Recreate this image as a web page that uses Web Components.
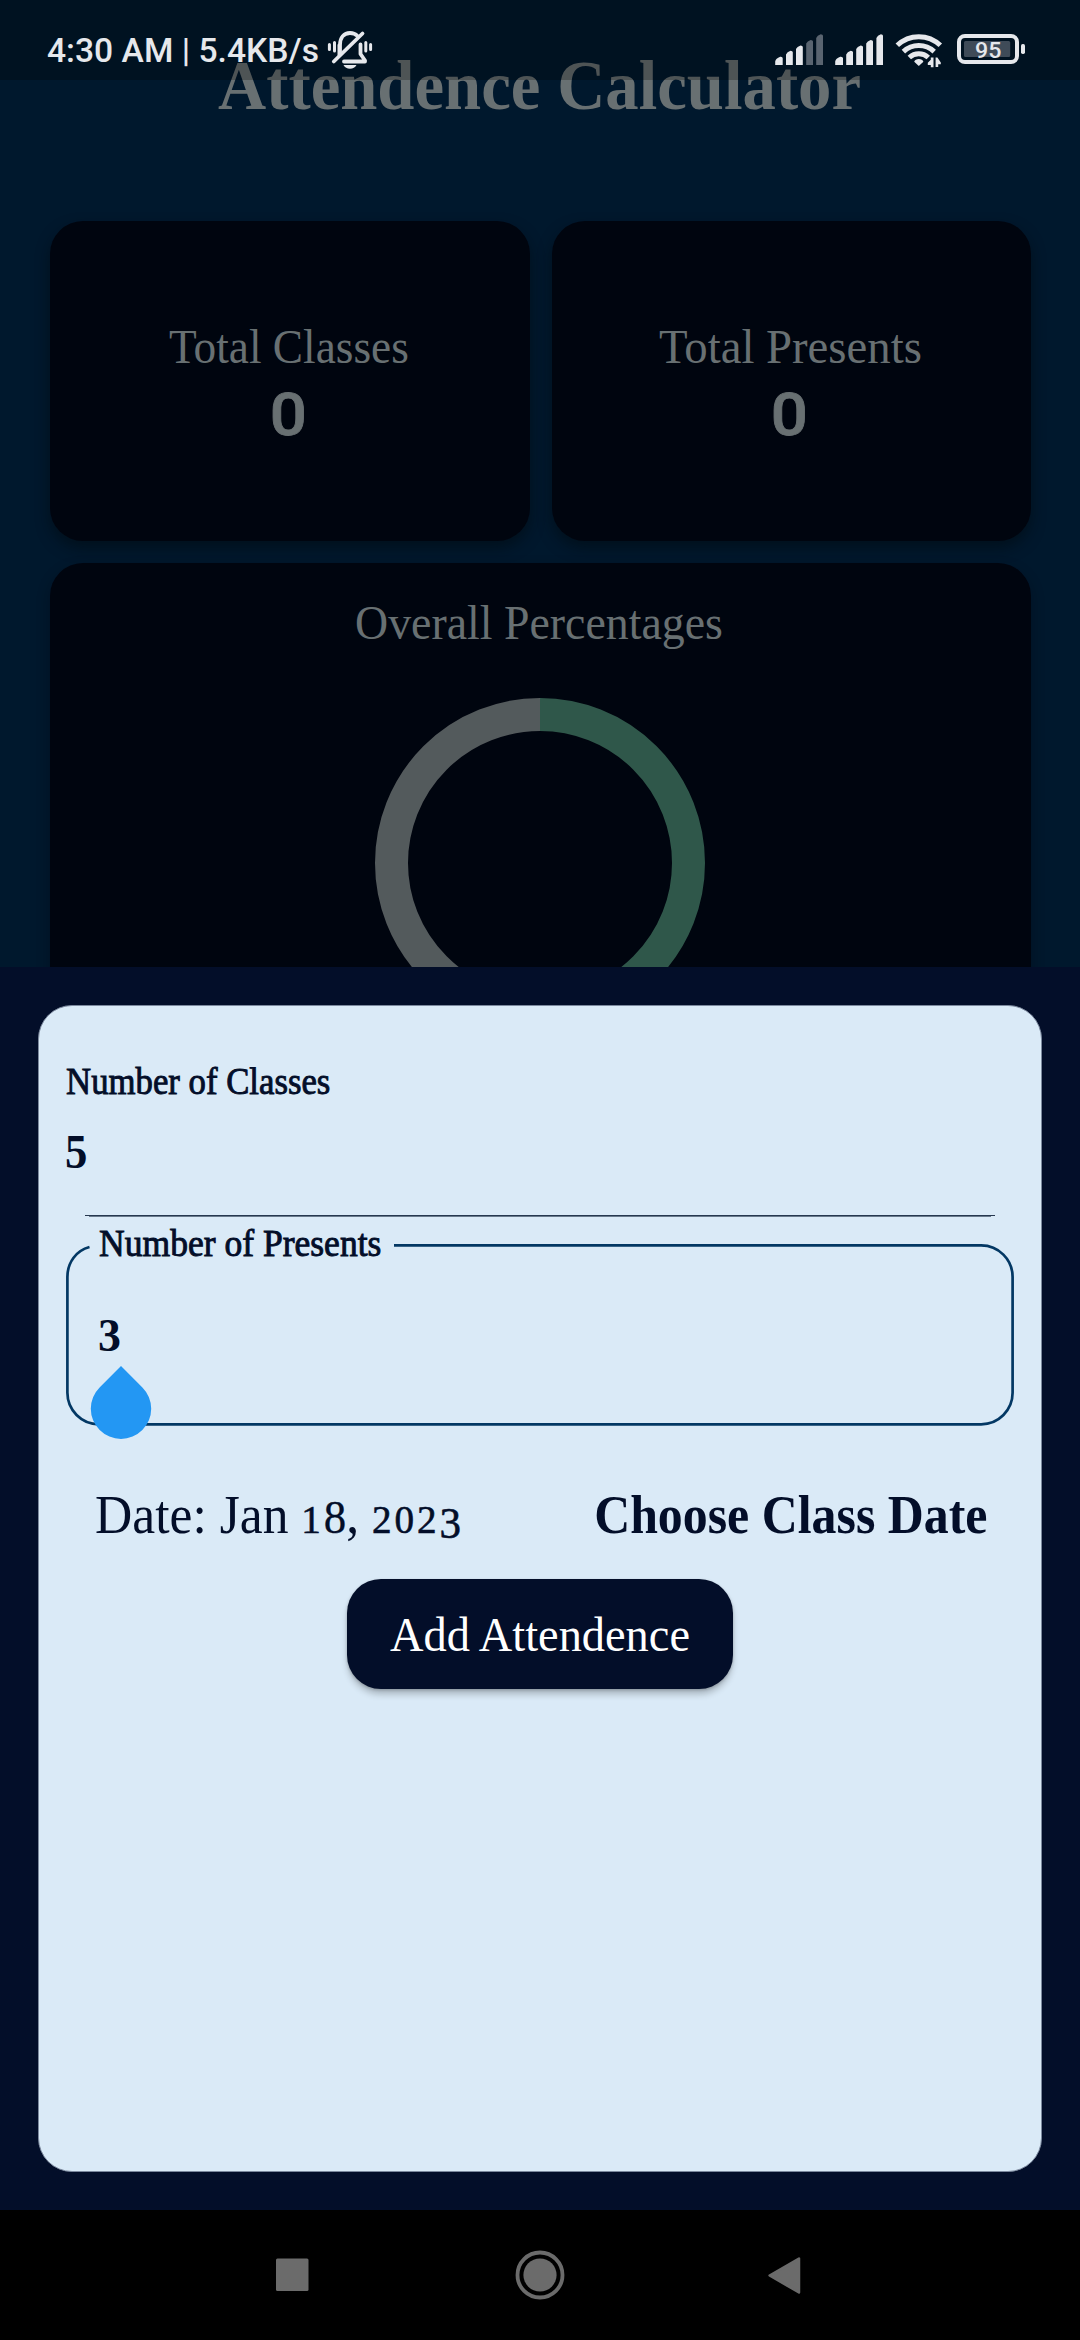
<!DOCTYPE html>
<html lang="en">
<head>
<meta charset="utf-8">
<title>Attendence Calculator</title>
<style>
  html, body { margin: 0; background: #000; }
  body { width: 1080px; height: 2340px; overflow: hidden; font-family: "Liberation Serif", serif; }
</style>
</head>
<body>
<attendance-app></attendance-app>
<script>
const define = (name, html, after) => customElements.define(name, class extends HTMLElement {
  connectedCallback() {
    if (this.shadowRoot) return;
    this.attachShadow({ mode: 'open' }).innerHTML = typeof html === 'function' ? html(this) : html;
    if (after) after(this);
  }
});

define('attendance-app', `
<style>
  :host { display: flex; flex-direction: column; position: relative; width: 1080px; height: 2340px; overflow: hidden; }
  phone-status { position: absolute; left: 0; top: 0; z-index: 2; }
</style>
<phone-status></phone-status>
<dash-board></dash-board>
<bottom-sheet></bottom-sheet>
<nav-bar></nav-bar>`);

define('phone-status', `
<style>
  :host { display: flex; width: 1080px; height: 80px; background: rgba(0,0,0,.25); color: #e6e8ec; }
  .clock { margin: 33px 0 0 47px; }
  .bell { margin: 30px 0 0 8px; }
  .right { margin-left: auto; margin-right: 50px; display: flex; padding-top: 30px; }
  .battery { display: grid; margin-left: 12px; }
  .battery > * { grid-area: 1 / 1; }
  .battery .num { justify-self: start; margin: 9px 0 0 19px; }
  svg { display: block; overflow: visible; }
</style>
<fit-text class="clock" size="34" w="271.5" weight="500" family="Roboto">4:30 AM | 5.4KB/s</fit-text>
<svg class="bell" width="46" height="40" viewBox="327 30 46 40" fill="none" stroke="#e6e8ec" stroke-width="3.8" stroke-linecap="round" stroke-linejoin="round">
  <path d="M329.4 44.500v5M334.500 42.500v8.500M365.800 42.500v8.500M370.600 44.500v5" stroke-width="3"/>
  <path d="M340 54V45C340 37.500 344 33 350 33C353 33 355.500 34 357.500 36"/>
  <path d="M360.500 44.500V54L365 60.500V61.500H344"/>
  <path d="M362.500 33.500L333.800 61.500"/>
  <path d="M343.500 65H356.500C355 67.500 353 68.800 350 68.800S345 67.500 343.500 65Z" fill="#e6e8ec" stroke="none"/>
  <path d="M339 45V55" stroke-width="3"/>
</svg>
<div class="right">
  <svg width="171" height="40" viewBox="774 30 171 40" fill="#e6e8ec">
    <path d="M775.200 65v-3.500q.5-3 5-4.700q2.500-.3 2.500 1.500v6.700zM786 65v-10.500q1-2.500 4.500-3.700q2.300 0 2.300 1.500v12.700zM796 65v-16q1-2.500 4.500-3.600q2.300 0 2.300 1.500v18.100z"/>
    <path fill="#596470" d="M806.200 65v-21.500q1-2.500 4.500-3.600q2.300 0 2.300 1.500v23.600zM816.200 65v-27q1-2.500 4.500-3.700q2.300 0 2.300 1.500v29.200z"/>
    <path d="M835.200 65v-3.500q.5-3 5-4.700q2.800-.3 2.800 1.500v6.700zM846.200 65v-10.500q1-2.500 4.500-3.700q2.300 0 2.300 1.500v12.700zM856.200 65v-16q1-2.500 4.500-3.600q2.300 0 2.300 1.500v18.100zM866.200 65v-21.500q1-2.500 4.500-3.600q2.300 0 2.300 1.500v23.600zM876.400 65v-27q1-2.500 4.500-3.700q2.100 0 2.100 1.500v29.200z"/>
    <g fill="none" stroke="#e6e8ec" stroke-width="5">
      <path d="M897.300 45.300A31 31 0 0 1 940.300 45.300"/>
      <path d="M903.400 51.600A22.500 22.500 0 0 1 934.200 51.600"/>
      <path d="M909.300 57.500A14 14 0 0 1 928.300 57.500"/>
    </g>
    <path d="M918.800 66l-4.600-4.300q1-2.600 4.600-2.600t4.600 2.600z"/>
    <path d="M930.800 57.500h2.700v9.800h-2.700v-2.200h-3v-2.300l3-3zM935.600 57.500h1.800l3.400 5.100v1.700h-2.600v2.800h-2.600z"/>
  </svg>
  <div class="battery">
    <svg width="73" height="40" viewBox="957 30 73 40">
      <rect x="959" y="36" width="58" height="26" rx="6" fill="none" stroke="#e6e8ec" stroke-width="4"/>
      <rect x="964" y="41" width="46.200" height="16" rx="1.500" fill="#3f4b58"/>
      <rect x="1021" y="44" width="4" height="10" rx="1.700" fill="#e6e8ec"/>
    </svg>
    <fit-text class="num" size="22.500" w="24.500" weight="500" family="Roboto">95</fit-text>
  </div>
</div>`);

define('dash-board', `
<style>
  :host { display: flex; flex-direction: column; flex: none; box-sizing: border-box; width: 1080px; height: 967px; overflow: hidden;
    background: #00182d; color: #687072; padding: 52px 49px 0 50px; }
  .title { align-self: center; margin-right: 3px; }
  .stats { display: flex; gap: 22px; margin-top: 100px; }
  .overall { flex: none; margin-top: 22px; height: 600px; background: #00050f; border-radius: 33px; box-shadow: 0 6px 14px rgba(0,4,12,.3);
    display: flex; flex-direction: column; align-items: center; box-sizing: border-box; padding-top: 35px; }
  .overall fit-text { margin-right: 3px; }
  .overall svg { display: block; margin: 51px 1px 0 0; }
</style>
<fit-text class="title" size="69" w="642.500" weight="700">Attendence Calculator</fit-text>
<div class="stats">
  <stat-card label="Total Classes" w="239" value="0"></stat-card>
  <stat-card label="Total Presents" w="262" value="0"></stat-card>
</div>
<div class="overall">
  <fit-text size="48.500" w="366">Overall Percentages</fit-text>
  <svg width="330" height="330" viewBox="0 0 330 330" fill="none" stroke-width="33">
    <path d="M165 16.500A148.500 148.500 0 0 1 165 313.500" stroke="#2f574a"/>
    <path d="M165 16.500A148.500 148.500 0 0 0 165 313.500" stroke="#535a5c"/>
  </svg>
</div>`);

define('stat-card', h => `
<style>
  :host { display: flex; flex-direction: column; align-items: center; flex: 1; box-sizing: border-box; height: 320px; padding: 101px 3px 0 0; gap: 14px;
    background: #00050f; border-radius: 33px; box-shadow: 0 7px 14px rgba(0,12,18,.6); }
</style>
<fit-text size="48.500" w="${h.getAttribute('w')}">${h.getAttribute('label')}</fit-text>
<fit-text size="59" w="31" weight="500" family="Roboto" style="-webkit-text-stroke:.8px #687072">${h.getAttribute('value')}</fit-text>`);

define('bottom-sheet', `
<style>
  :host { display: block; flex: none; box-sizing: border-box; width: 1080px; height: 1243px; padding: 38px; background: #030e29; color: #030e29; }
  .panel { box-sizing: border-box; height: 1167px; background: #daeaf7; border: 1px solid #7c899e; border-radius: 34px; padding: 0 27px;
    display: flex; flex-direction: column; }
  .row { display: flex; justify-content: space-between; margin: 62px 28px 0 30px; }
  .add { align-self: center; box-sizing: border-box; width: 386px; height: 110px; margin-top: 37px; padding: 31px 2px 0 0; border-radius: 34px;
    background: #030e29; color: #fff; display: flex; justify-content: center; box-shadow: 0 6px 7px -1px rgba(0,0,0,.24), 0 1px 3px rgba(0,0,0,.2); }
  .small { font-size: 41px; letter-spacing: 3px; -webkit-text-stroke: .6px #030e29; }
  .eight { font-size: 47px; -webkit-text-stroke: .3px #030e29; }
  .low { display: inline-block; line-height: 1; height: 0; transform: translateY(5px); font-size: 45px; letter-spacing: 0; }
</style>
<div class="panel">
  <line-field></line-field>
  <outline-field></outline-field>
  <div class="row">
    <fit-text size="54" w="363">Date: Jan <span class="small">1</span><span class="eight">8</span>, <span class="small">202<span class="low">3</span></span></fit-text>
    <fit-text size="54" w="390.500" weight="700">Choose Class Date</fit-text>
  </div>
  <div class="add"><fit-text size="48.500" w="298.500">Add Attendence</fit-text></div>
</div>`);

define('line-field', `
<style>
  :host { display: flex; flex-direction: column; align-items: flex-start; padding-top: 57px; }
  .label { margin-left: 1px; -webkit-text-stroke: .9px #030e29; }
  .value { margin-top: 28px; }
  svg { display: block; margin-top: 39px; }
</style>
<fit-text class="label" size="37" w="263">Number of Classes</fit-text>
<fit-text class="value" size="48" w="20.500" weight="700">5</fit-text>
<svg width="948" height="2" viewBox="0 0 948 2"><path d="M19 0H929V1H19Z" fill="#26384f"/><path d="M23 1H925V2H23Z" fill="#687a8c"/></svg>`);

define('outline-field', `
<style>
  :host { display: grid; position: relative; width: 948px; height: 182px; margin-top: 27px; justify-items: start; align-items: start; }
  .box, .label, .value { grid-area: 1 / 1; }
  .label { margin: -19px 0 0 34px; -webkit-text-stroke: .9px #030e29; }
  .value { margin: 68px 0 0 33px; }
  svg { display: block; overflow: visible; }
  .handle { position: absolute; left: 25px; top: 122px; }
</style>
<svg class="box" width="948" height="182" viewBox="0 0 948 182" fill="none" stroke="#033864" stroke-width="2.700">
  <path d="M328 1.400H915A31.500 31.500 0 0 1 946.600 33V148.500A31.500 31.500 0 0 1 915 180.300H33A31.500 31.500 0 0 1 1.400 148.500V33C1.400 18 10.500 6.500 23.500 3"/>
</svg>
<fit-text class="label" size="37" w="281">Number of Presents</fit-text>
<fit-text class="value" size="47" w="20.500" weight="700">3</fit-text>
<svg class="handle" width="61" height="73" viewBox="0 0 61 73"><path fill="#2397f3" d="M30 0L51.400 21.400A30.200 30.200 0 1 1 8.600 21.400Z"/></svg>`);

define('nav-bar', `
<style>
  :host { display: flex; justify-content: space-between; align-items: center; box-sizing: border-box; width: 1080px; height: 130px; padding: 0 279px 0 275px; background: #000; }
  svg { display: block; }
  .home { margin-left: 4px; }
</style>
<svg width="34" height="50" viewBox="275 2250 34 50"><rect x="276" y="2258.500" width="32.500" height="32.500" rx="1.500" fill="#6b6b6b"/></svg>
<svg class="home" width="52" height="52" viewBox="514 2249.500 52 52"><circle cx="540" cy="2275.500" r="22.500" fill="none" stroke="#6b6b6b" stroke-width="3.800"/><circle cx="540" cy="2275.500" r="16.600" fill="#6b6b6b"/></svg>
<svg width="34" height="50" viewBox="767 2250 34 50"><path d="M769.600 2275.500L799 2258.500V2292.500Z" fill="#6b6b6b" stroke="#6b6b6b" stroke-width="2.500" stroke-linejoin="round"/></svg>`);

/* One line of text whose ink is scaled horizontally to an exact width. */
define('fit-text', h => {
  const size = +h.getAttribute('size');
  return `<style>
  :host { display: block; flex: none; width: ${h.getAttribute('w')}px; height: ${Math.round(size)}px; }
  span { display: inline-block; vertical-align: top; white-space: nowrap; transform-origin: 0 0; height: ${Math.round(size)}px;
    font: ${h.getAttribute('weight') || 400} ${size}px/${Math.round(size)}px ${h.getAttribute('family') || '"Liberation Serif"'}, serif; }
</style><span><slot></slot></span>`;
}, h => {
  const span = h.shadowRoot.querySelector('span');
  const ctx = document.createElement('canvas').getContext('2d');
  ctx.font = `${h.getAttribute('weight') || 400} ${h.getAttribute('size')}px ${h.getAttribute('family') || '"Liberation Serif"'}`;
  const m = ctx.measureText(h.textContent);
  const left = -m.actualBoundingBoxLeft, right = m.width - m.actualBoundingBoxRight;
  const ink = span.getBoundingClientRect().width - left - right;
  span.style.transform = `scaleX(${+h.getAttribute('w') / ink}) translateX(${-left}px)`;
});
</script>
</body>
</html>
